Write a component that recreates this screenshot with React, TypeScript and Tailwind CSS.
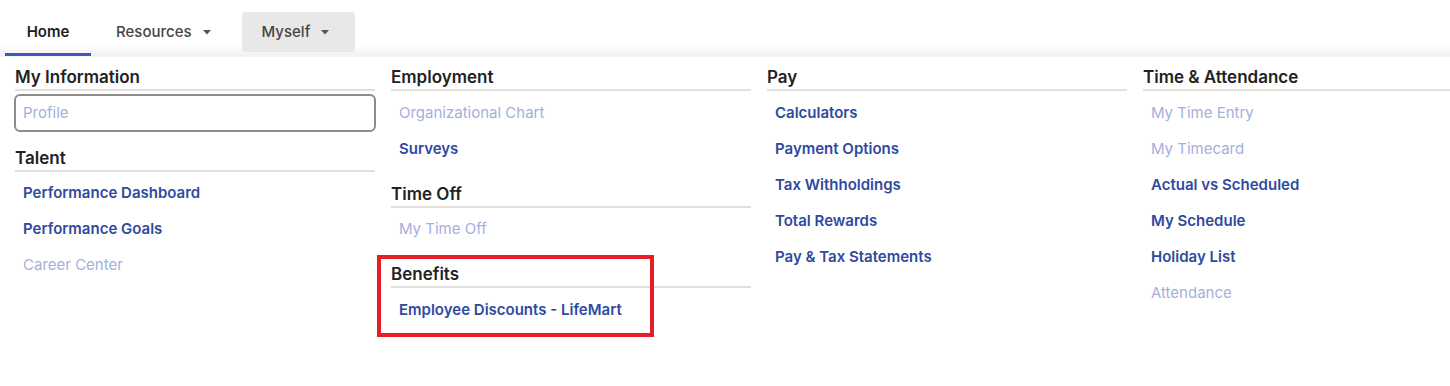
import React from 'react';

type Item = { label: string; active?: boolean; focused?: boolean };
type Section = { title: string; items: Item[] };

const columns: Section[][] = [
  [
    { title: 'My Information', items: [{ label: 'Profile', focused: true }] },
    {
      title: 'Talent',
      items: [
        { label: 'Performance Dashboard', active: true },
        { label: 'Performance Goals', active: true },
        { label: 'Career Center' },
      ],
    },
  ],
  [
    {
      title: 'Employment',
      items: [{ label: 'Organizational Chart' }, { label: 'Surveys', active: true }],
    },
    { title: 'Time Off', items: [{ label: 'My Time Off' }] },
    { title: 'Benefits', items: [{ label: 'Employee Discounts - LifeMart', active: true }] },
  ],
  [
    {
      title: 'Pay',
      items: [
        { label: 'Calculators', active: true },
        { label: 'Payment Options', active: true },
        { label: 'Tax Withholdings', active: true },
        { label: 'Total Rewards', active: true },
        { label: 'Pay & Tax Statements', active: true },
      ],
    },
  ],
  [
    {
      title: 'Time & Attendance',
      items: [
        { label: 'My Time Entry' },
        { label: 'My Timecard' },
        { label: 'Actual vs Scheduled', active: true },
        { label: 'My Schedule', active: true },
        { label: 'Holiday List', active: true },
        { label: 'Attendance' },
      ],
    },
  ],
];

const Caret = () => (
  <svg width="8" height="5" viewBox="0 0 8 5" className="ml-[11px] fill-[#555]">
    <path d="M0 0h8L4 4.5z" />
  </svg>
);

const MenuItem: React.FC<{ item: Item }> = ({ item }) => (
  <div
    className={
      'h-9 flex items-center pl-2 text-[15px] ' +
      (item.active ? 'font-semibold text-[#2f4a9f] ' : 'text-[#a3b0dc] ') +
      (item.focused ? 'rounded-[5px] outline-2 outline-[#8c8c8c] -outline-offset-1' : '')
    }
  >
    {item.label}
  </div>
);

const MenuSection: React.FC<{ section: Section; first: boolean }> = ({ section, first }) => {
  const body = (
    <>
      <h3
        className={
          'text-[17px] leading-[22px] font-semibold text-[#222] border-b-2 border-[#e3dfdb] pb-px mb-1 ' +
          (first ? '' : 'mt-[15.5px]')
        }
      >
        {section.title}
      </h3>
      {section.items.map((item) => (
        <MenuItem key={item.label} item={item} />
      ))}
    </>
  );
  if (section.title === 'Benefits') {
    return (
      <div className="relative">
        {body}
        {/* highlight frame drawn over the section */}
        <div className="absolute -left-[14px] -top-[8px] w-[277px] h-[82px] border-4 border-[#e41e26] pointer-events-none" />
      </div>
    );
  }
  return <div>{body}</div>;
};

export default function App() {
  return (
    <div className="w-[1450px] h-[386px] overflow-hidden bg-white font-['Inter',sans-serif]">
      <nav className="h-[57px] flex items-end pl-[5px] bg-gradient-to-b from-white from-[80%] to-[#f1f1f1] border-b border-[#f3f3f3]">
        <div className="w-[86px] h-[45px] flex items-center justify-center border-b-[3px] border-[#3d5cba] text-[15px] font-semibold text-[#1e1e1e]">
          Home
        </div>
        <div className="ml-[25px] h-[45px] flex items-center pb-[2px] text-[15px] font-medium text-[#454545]">
          Resources
          <Caret />
        </div>
        <div className="ml-[31px] mb-[4px] w-[113px] h-[40px] flex items-center pl-5 rounded-[3px] bg-[#e8e8e8] text-[15px] font-medium text-[#454545]">
          Myself
          <Caret />
        </div>
      </nav>
      <div className="flex gap-4 pl-[15px] pt-[9px]">
        {columns.map((col, i) => (
          <div key={i} className="w-[360px] shrink-0">
            {col.map((section, j) => (
              <MenuSection key={section.title} section={section} first={j === 0} />
            ))}
          </div>
        ))}
      </div>
    </div>
  );
}
